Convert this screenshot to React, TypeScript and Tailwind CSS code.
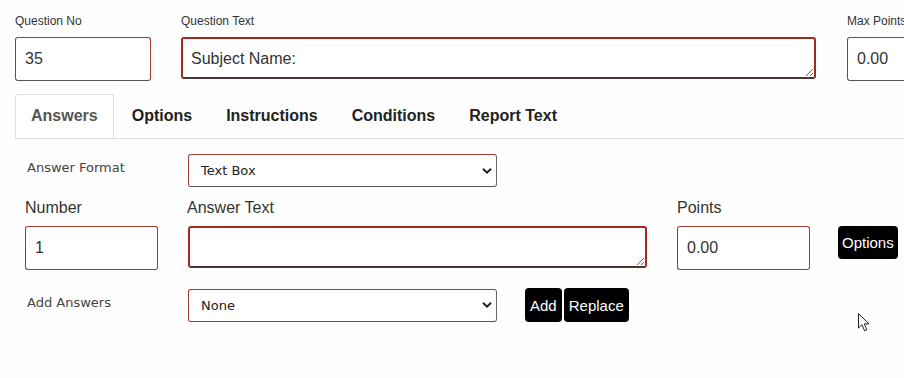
import React from 'react';

const labelTop = "block h-4 text-[12px] leading-4 text-[#333] mb-2";
const inputBox = "h-[44px] bg-white border border-[#a33b31] border-l-[#555] border-b-[#555] rounded-[3px] pl-[9px] text-[16px] text-[#333] outline-none";
const areaBox = "h-[42px] bg-white border-2 border-[#a1291e] border-b-[#4d3430] rounded-[3px] pl-2 pt-[10px] text-[16px] leading-5 text-[#333] outline-none";
const formLabel = "text-[13px] text-[#444] font-['DejaVu_Sans',sans-serif]";
const fieldLabel = "block h-5 text-[16px] leading-5 text-[#333] mb-2";
const blackBtn = "bg-black text-white text-[15px] rounded-[4px] leading-none";

const tabs = ['Answers', 'Options', 'Instructions', 'Conditions', 'Report Text'];

const Chevron = () => (
  <svg width="10" height="7" viewBox="0 0 10 7" className="absolute right-[5px] top-1/2 -translate-y-1/2 pointer-events-none">
    <path d="M1 1.2 L5 5.2 L9 1.2" fill="none" stroke="#222" strokeWidth="2" />
  </svg>
);

const Select: React.FC<{ value: string }> = ({ value }) => (
  <div className="relative w-[309px] h-[33px]">
    <select
      defaultValue={value}
      className="appearance-none w-full h-full bg-white border border-[#a33b31] border-b-[#555] border-r-[#666] rounded-[3px] pl-3 pt-px text-[13px] text-[#222] font-['DejaVu_Sans',sans-serif] outline-none"
    >
      <option>{value}</option>
    </select>
    <Chevron />
  </div>
);

export default function App() {
  return (
    <div className="relative w-[904px] h-[378px] overflow-hidden bg-[#fefefe] font-['Liberation_Sans',Arial,sans-serif]">
      {/* header fields */}
      <div className="flex pl-[15px] pt-[13px]">
        <div className="w-[136px] shrink-0">
          <label className={labelTop}>Question No</label>
          <input defaultValue="35" className={`${inputBox} w-full`} />
        </div>
        <div className="w-[635px] shrink-0 ml-[30px]">
          <label className={labelTop}>Question Text</label>
          <textarea defaultValue="Subject Name:" className={`${areaBox} w-full mt-[4px] block`} />
        </div>
        <div className="w-[136px] shrink-0 ml-[31px]">
          <label className={`${labelTop} whitespace-nowrap`}>Max Points</label>
          <input defaultValue="0.00" className={`${inputBox} w-full`} />
        </div>
      </div>

      {/* tabs */}
      <div className="ml-[15px] mt-[13px] flex border-b border-[#ddd]">
        {tabs.map((t, i) => (
          <div
            key={t}
            className={
              i === 0
                ? "h-[44px] px-[15px] mr-[2px] -mb-px flex items-center text-[16px] font-bold text-[#555] bg-white border border-[#ddd] border-b-white rounded-t-[3px]"
                : "h-[44px] px-[15px] mr-[2px] flex items-center text-[16px] font-bold text-[#222] border border-transparent"
            }
          >
            {t}
          </div>
        ))}
      </div>

      {/* answer format */}
      <div className="flex items-center mt-[15px] pl-[27px]">
        <div className={`${formLabel} w-[161px] -mt-[5px]`}>Answer Format</div>
        <Select value="Text Box" />
      </div>

      {/* answer row */}
      <div className="flex items-start mt-[11px] pl-[25px]">
        <div className="w-[133px] shrink-0">
          <label className={fieldLabel}>Number</label>
          <input defaultValue="1" className={`${inputBox} w-full`} />
        </div>
        <div className="w-[459px] shrink-0 ml-[30px]">
          <label className={`${fieldLabel} -ml-px`}>Answer Text</label>
          <textarea className={`${areaBox} w-full block mt-[4px] h-[41px]`} />
        </div>
        <div className="w-[133px] shrink-0 ml-[30px]">
          <label className={fieldLabel}>Points</label>
          <input defaultValue="0.00" className={`${inputBox} w-full`} />
        </div>
        <button className={`${blackBtn} ml-[28px] mt-[28px] h-[33px] px-[4px]`}>Options</button>
      </div>

      {/* add answers */}
      <div className="flex items-center mt-[18px] pl-[27px]">
        <div className={`${formLabel} w-[161px] -mt-[5px]`}>Add Answers</div>
        <Select value="None" />
        <button className={`${blackBtn} ml-7 h-[34px] px-[5px]`}>Add</button>
        <button className={`${blackBtn} ml-[2px] h-[34px] px-[5px]`}>Replace</button>
      </div>

      {/* mouse pointer */}
      <svg width="14" height="20" viewBox="0 0 14 20" className="absolute left-[858px] top-[313px]">
        <path d="M0.5 0.5 L0.5 15 L4 11.7 L6.6 17.8 L8.8 16.8 L6.3 10.9 L11 10.9 Z" fill="#fff" stroke="#222" strokeWidth="1" strokeLinejoin="miter" />
      </svg>
    </div>
  );
}
